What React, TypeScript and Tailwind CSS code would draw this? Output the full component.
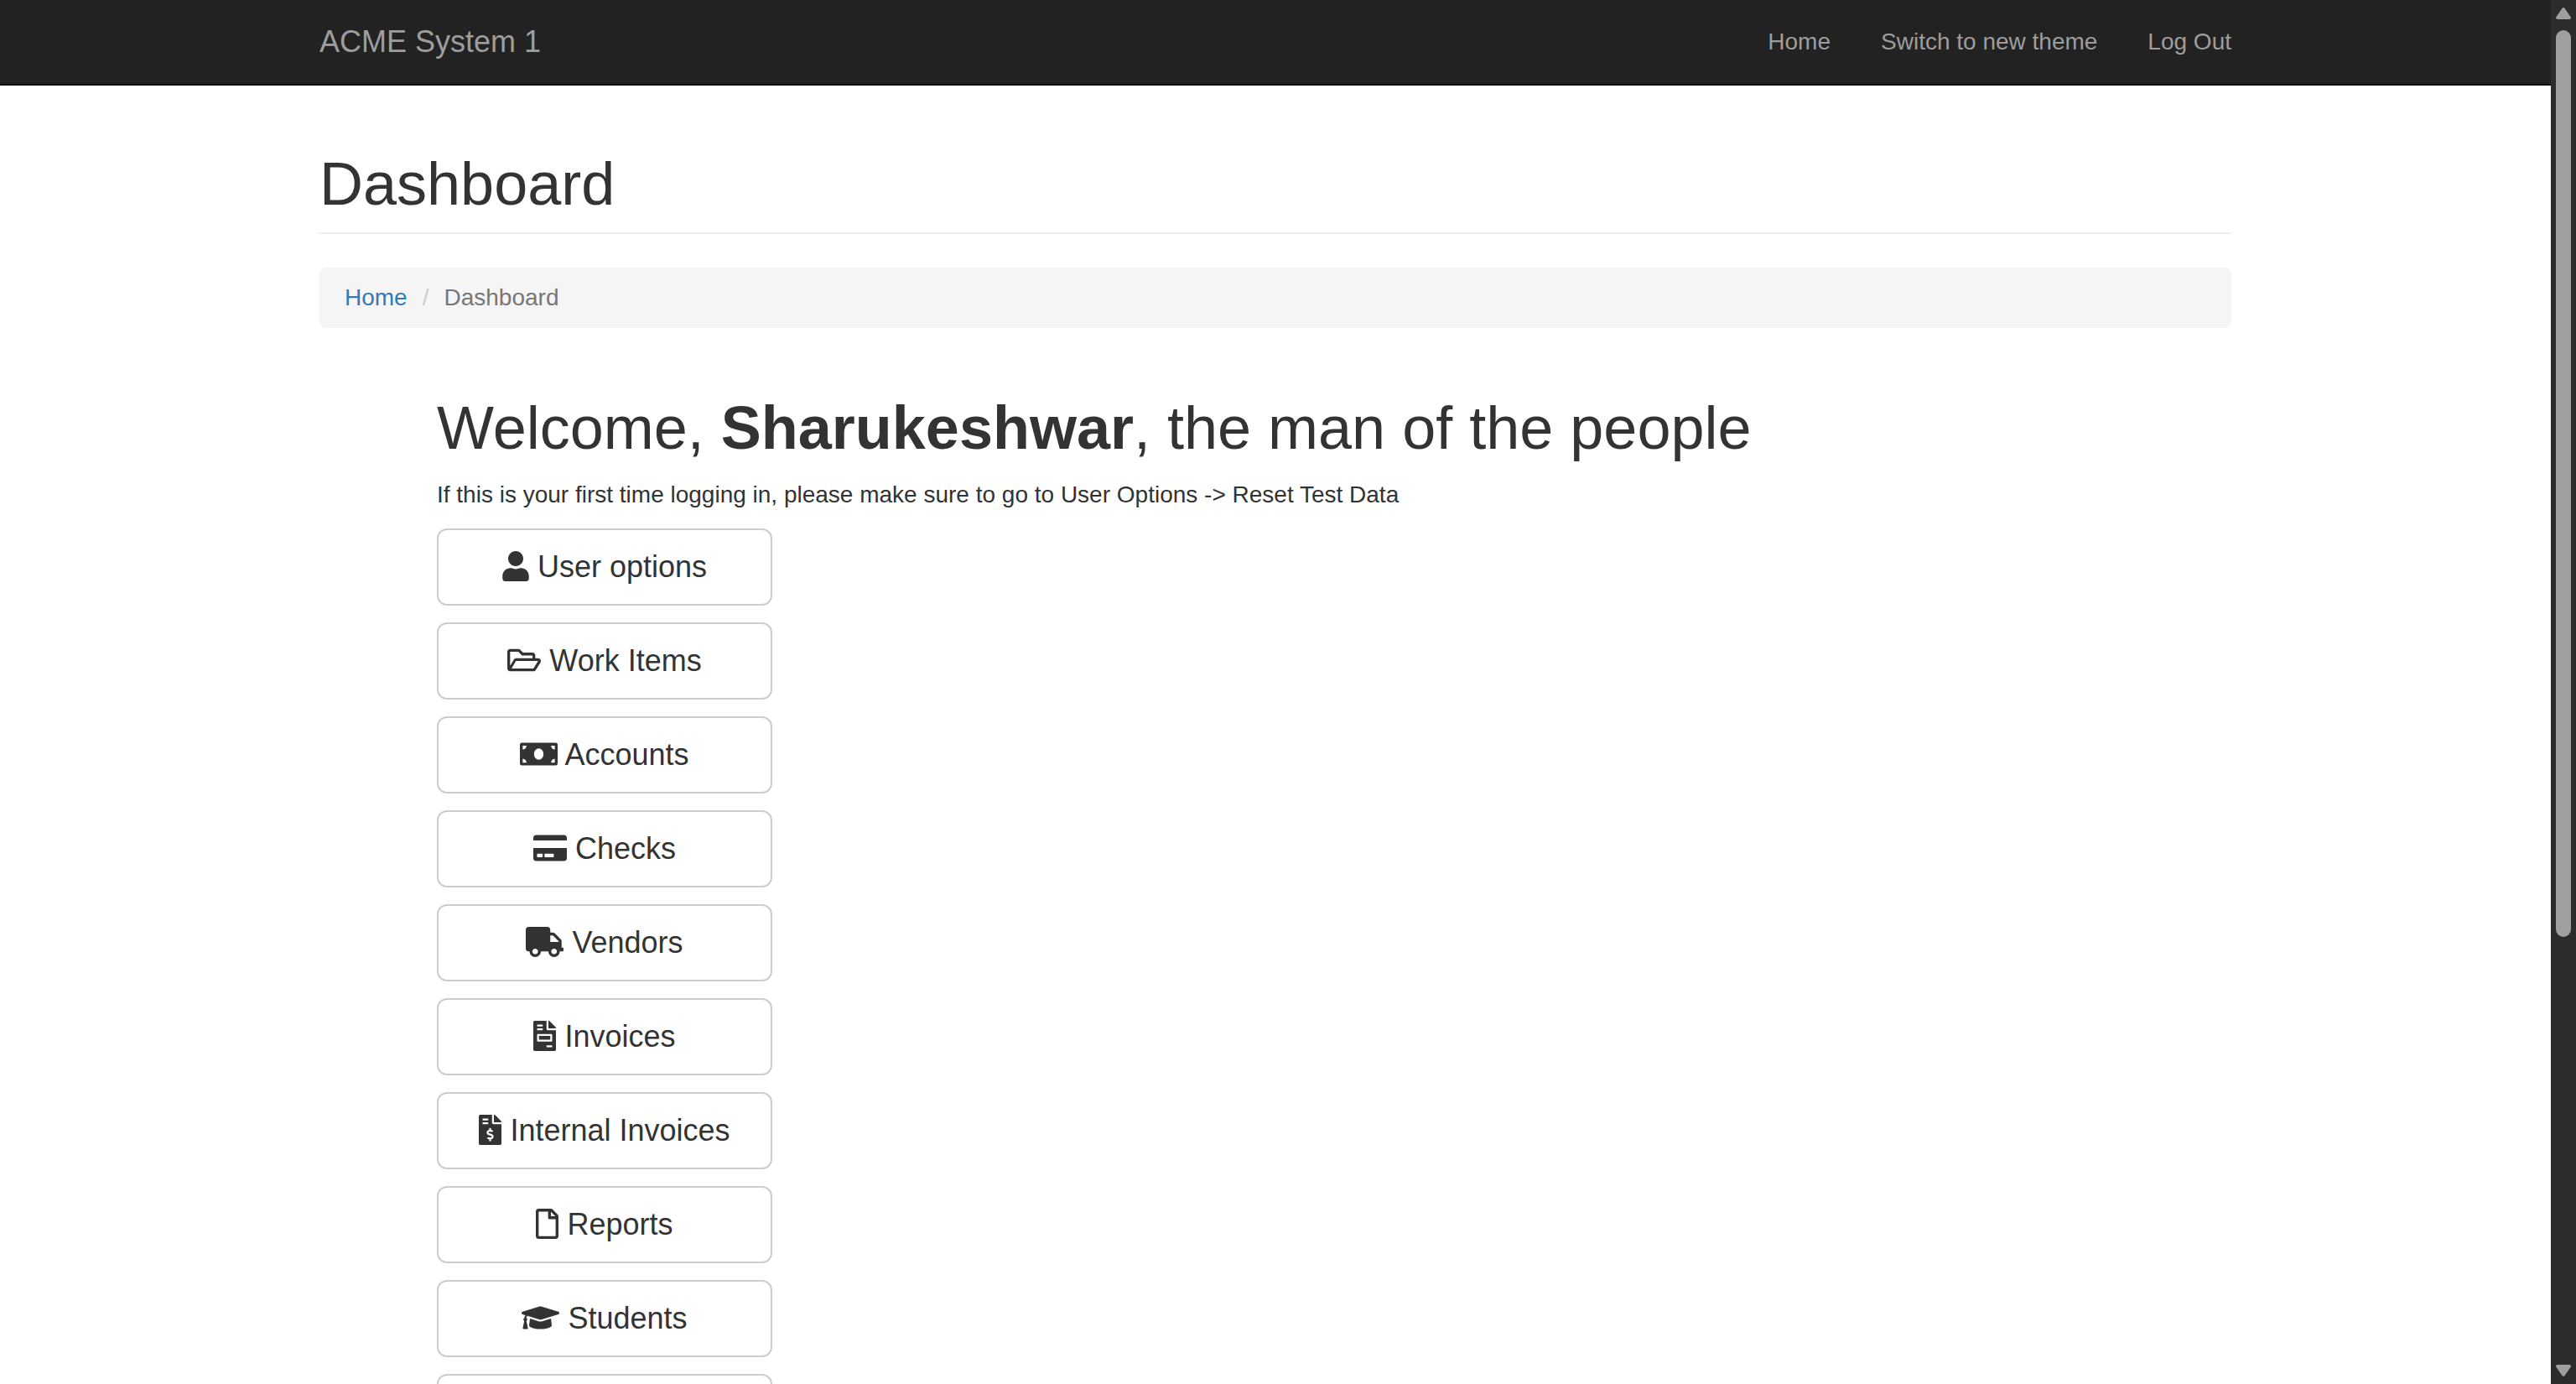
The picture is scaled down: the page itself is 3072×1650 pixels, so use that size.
import React from "react";
import type { IconType } from "react-icons";
import {
  FaUser,
  FaRegFolderOpen,
  FaMoneyBill,
  FaCreditCard,
  FaTruck,
  FaFileInvoice,
  FaFileInvoiceDollar,
  FaRegFile,
  FaGraduationCap,
} from "react-icons/fa";

const navLinks = ["Home", "Switch to new theme", "Log Out"];

const sections: { label: string; Icon: IconType; width: string }[] = [
  { label: "User options", Icon: FaUser, width: "w-8" },
  { label: "Work Items", Icon: FaRegFolderOpen, width: "w-10" },
  { label: "Accounts", Icon: FaMoneyBill, width: "w-[45px]" },
  { label: "Checks", Icon: FaCreditCard, width: "w-10" },
  { label: "Vendors", Icon: FaTruck, width: "w-[45px]" },
  { label: "Invoices", Icon: FaFileInvoice, width: "w-[27px]" },
  { label: "Internal Invoices", Icon: FaFileInvoiceDollar, width: "w-[27px]" },
  { label: "Reports", Icon: FaRegFile, width: "w-[27px]" },
  { label: "Students", Icon: FaGraduationCap, width: "w-[45px]" },
];

const buttonClass =
  "block w-full min-h-[92px] rounded-xl border-2 border-[#ccc] bg-white px-6 py-5 text-center text-4xl/[48px] whitespace-nowrap text-[#333] hover:bg-[#e6e6e6]";

function Navbar() {
  return (
    <header className="border-b-2 border-[#080808] bg-[#222] text-[#9d9d9d]">
      <div className="mx-auto flex max-w-[2280px] items-center justify-between py-[30px]">
        <a href="#" className="text-4xl/[40px] hover:text-white">
          ACME System 1
        </a>
        <nav className="flex gap-[60px]">
          {navLinks.map((label) => (
            <a key={label} href="#" className="text-[28px]/[40px] hover:text-white">
              {label}
            </a>
          ))}
        </nav>
      </div>
    </header>
  );
}

function Breadcrumb() {
  return (
    <nav aria-label="Breadcrumb" className="mt-10 rounded-lg bg-[#f5f5f5] px-[30px] py-4">
      <ol className="flex text-[28px]/[40px]">
        <li>
          <a href="#" className="text-[#337ab7] hover:underline">
            Home
          </a>
        </li>
        <li aria-hidden="true" className="px-[18px] text-[#ccc]">
          /
        </li>
        <li aria-current="page" className="text-[#777]">
          Dashboard
        </li>
      </ol>
    </nav>
  );
}

function Scrollbar() {
  return (
    <div aria-hidden="true" className="flex w-[30px] shrink-0 flex-col items-center bg-[#2c2c2c] py-[9px]">
      <svg viewBox="0 0 18 14" className="h-[14px] w-[18px] fill-[#9f9f9f]">
        <path d="M7.3 1.2Q9-1 10.7 1.2L17.5 11Q18.8 14 16 14H2Q-.8 14 .5 11Z" />
      </svg>
      <div className="my-[13px] w-full grow px-[6px]">
        <div className="h-[68.5%] rounded-full bg-[#9f9f9f]" />
      </div>
      <svg viewBox="0 0 18 14" className="h-[14px] w-[18px] fill-[#9f9f9f]">
        <path d="M7.3 12.8Q9 15 10.7 12.8L17.5 3Q18.8 0 16 0H2Q-.8 0 .5 3Z" />
      </svg>
    </div>
  );
}

export default function App() {
  return (
    <div className="flex h-screen overflow-hidden bg-white font-['Liberation_Sans',Arial,sans-serif] text-[#333]">
      <div className="min-w-0 grow overflow-hidden">
        <Navbar />
        <main className="mx-auto max-w-[2280px] pt-[78px]">
          <h1 className="border-b-2 border-[#eee] pb-[18px] text-7xl/[79px]">Dashboard</h1>
          <Breadcrumb />
          <section className="mt-20 px-[140px]">
            <h2 className="text-7xl/[79px]">
              Welcome, <strong>Sharukeshwar</strong>, the man of the people
            </h2>
            <p className="mt-5 text-[28px]/[40px]">
              If this is your first time logging in, please make sure to go to User Options -&gt; Reset Test Data
            </p>
            <div className="mt-5 flex w-[400px] flex-col gap-5">
              {sections.map(({ label, Icon, width }) => (
                <button key={label} type="button" className={buttonClass}>
                  <Icon className={`inline h-9 align-[-5px] ${width}`} /> {label}
                </button>
              ))}
              <button type="button" aria-label="More" className={buttonClass} />
            </div>
          </section>
        </main>
      </div>
      <Scrollbar />
    </div>
  );
}
